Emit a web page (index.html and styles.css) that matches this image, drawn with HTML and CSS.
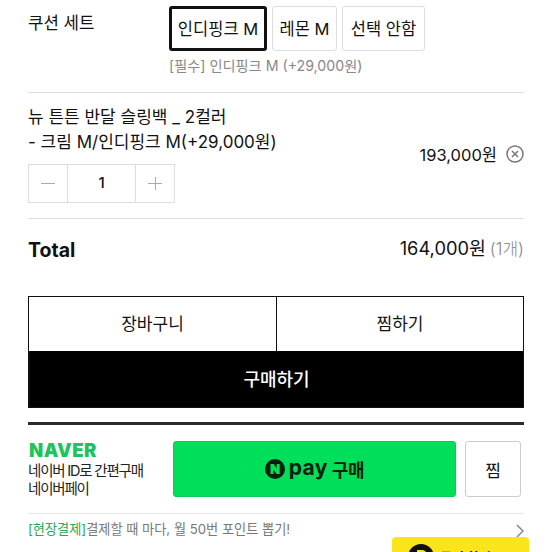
FILE: index.html
```html
<!DOCTYPE html>
<html lang="ko">
<head>
    <meta charset="UTF-8">
    <meta name="viewport" content="width=device-width, initial-scale=1.0">
    <title>뉴 튼튼 반달 슬링백</title>
    <link rel="stylesheet" href="styles.css">
</head>
<body>
    <main class="product">
        <section class="option-row">
            <h2 class="option-name">쿠션 세트</h2>
            <div class="option-content">
                <div class="option-list">
                    <button class="option selected">인디핑크 M</button>
                    <button class="option lemon">레몬 M</button>
                    <button class="option none">선택 안함</button>
                </div>
                <p class="option-desc">[필수] 인디핑크 M (+29,000원)</p>
            </div>
        </section>

        <section class="item">
            <div class="item-info">
                <p class="item-name">뉴 튼튼 반달 슬링백 _ 2컬러</p>
                <p class="item-option">- 크림 M/인디핑크 M(+29,000원)</p>
                <div class="quantity">
                    <button class="qty-btn" aria-label="minus">
                        <svg width="14" height="14" viewBox="0 0 14 14"><path d="M0 6.5h14"/></svg>
                    </button>
                    <span class="qty-value">1</span>
                    <button class="qty-btn" aria-label="plus">
                        <svg width="14" height="14" viewBox="0 0 14 14"><path d="M0 6.5h14M7.5 0v13"/></svg>
                    </button>
                </div>
            </div>
            <div class="item-price">
                <span>193,000원</span>
                <svg class="remove" width="18" height="18" viewBox="0 0 18 18">
                    <circle cx="9" cy="9" r="8"/>
                    <path d="M6 6l6 6M12 6l-6 6"/>
                </svg>
            </div>
        </section>

        <section class="total">
            <strong class="total-title">Total</strong>
            <p class="total-price">164,000원<span class="count">(1개)</span></p>
        </section>

        <div class="actions">
            <button class="action">장바구니</button>
            <button class="action">찜하기</button>
            <button class="action buy">구매하기</button>
        </div>

        <section class="naver">
            <div class="naver-main">
                <div class="naver-info">
                    <strong class="naver-logo">NAVER</strong>
                    <p>네이버 ID로 간편구매</p>
                    <p>네이버페이</p>
                </div>
                <button class="npay">
                    <svg width="20" height="20" viewBox="0 0 20 20">
                        <circle cx="10" cy="10" r="10" fill="#04200e"/>
                        <path d="M5.5 15V5h3.2l3 4.6V5h3v10h-3.1L8.5 10.4V15z" fill="#00df5a"/>
                    </svg>
                    <span class="npay-logo">pay</span>
                    <span class="npay-text">구매</span>
                </button>
                <button class="wish">찜</button>
            </div>
            <div class="naver-event">
                <p><span class="event-tag">[현장결제]</span>결제할 때 마다, 월 50번 포인트 뽑기!</p>
                <svg width="8" height="14" viewBox="0 0 8 14"><path d="M1 1l6 6-6 6"/></svg>
            </div>
        </section>
    </main>

    <button class="floating">
        <svg width="26" height="26" viewBox="0 0 26 26">
            <circle cx="13" cy="13" r="13" fill="#111"/>
            <path d="M9 6h5a5 5 0 0 1 5 5v9H9z" fill="#fae51a"/>
        </svg>
        <span>문의 확인도구</span>
    </button>
</body>
</html>
```
FILE: styles.css
```css
* {
    margin: 0;
    padding: 0;
    box-sizing: border-box;
}

body {
    height: 552px;
    overflow: hidden;
    background: #fff;
    color: #111;
    font-family: Inter, "Noto Sans CJK KR", sans-serif;
    font-size: 17px;
    position: relative;
}

button {
    background: #fff;
    border: none;
    color: inherit;
    font-family: inherit;
    font-size: inherit;
    white-space: nowrap;
}

svg {
    display: block;
    flex: none;
    fill: none;
}

.product {
    padding: 6px 28px 0 28px;
}

.option-row {
    display: flex;
    height: 87px;
    border-bottom: 1px solid #ddd;
}

.option-name {
    width: 141px;
    padding-top: 5px;
    font-size: 16.8px;
    font-weight: 400;
    line-height: 24px;
}

.option-list {
    display: flex;
    gap: 5px;
}

.option {
    height: 45px;
    padding-bottom: 1px;
    border: 1px solid #ddd;
    border-radius: 3px;
    font-size: 16.5px;
}

.selected {
    width: 98px;
    border: 3px solid #111;
}

.lemon {
    width: 65px;
}

.none {
    width: 83px;
}

.option-desc {
    padding-top: 3px;
    color: #888;
    font-size: 14.2px;
    line-height: 24px;
}

.item {
    display: flex;
    justify-content: space-between;
    height: 126px;
    padding-top: 11px;
    border-bottom: 1px solid #ddd;
}

.item-name,
.item-option {
    font-size: 17px;
    line-height: 26px;
}

.item-option {
    margin-top: -1px;
}

.quantity {
    display: flex;
    width: 147px;
    height: 39px;
    margin-top: 9px;
    border: 1px solid #ddd;
}

.qty-btn {
    display: flex;
    align-items: center;
    justify-content: center;
    width: 38px;
    stroke: #aaa;
}

.qty-value {
    flex: 1;
    border: solid #ddd;
    border-width: 0 1px;
    font-size: 15px;
    font-weight: 500;
    line-height: 36px;
    text-align: center;
}

.item-price {
    display: flex;
    align-items: center;
    gap: 9px;
    height: 100px;
    font-size: 16.5px;
}

.remove {
    stroke: #777;
    stroke-width: 1.5;
}

.total {
    display: flex;
    justify-content: space-between;
    height: 77px;
    padding-top: 15px;
    line-height: 28px;
}

.total-title {
    padding-top: 2px;
    font-size: 19.5px;
}

.total-price {
    font-size: 18.3px;
}

.count {
    margin-left: 4px;
    color: #888;
    font-size: 17px;
    font-weight: 300;
}

.actions {
    display: grid;
    grid-template-columns: 1fr 1fr;
    grid-template-rows: 54px 56px;
    border: 1px solid #111;
}

.action {
    padding-bottom: 3px;
    font-size: 17px;
}

.action + .action {
    border-left: 1px solid #111;
}

.actions .buy {
    grid-column: span 2;
    background: #000;
    color: #fff;
    font-size: 18px;
    font-weight: 500;
}

.naver {
    margin-top: 14px;
    border-top: 3px solid #2b2b2d;
}

.naver-main {
    display: flex;
    height: 89px;
    padding-top: 16px;
    border-bottom: 1px solid #e5e5e5;
}

.naver-info {
    width: 145px;
    color: #222;
    font-size: 14.5px;
    letter-spacing: -1.2px;
    line-height: 18px;
}

.naver-logo {
    display: block;
    margin-bottom: 3px;
    padding-left: 1px;
    color: #1dc45b;
    font-family: Inter, sans-serif;
    font-size: 18.5px;
    font-weight: 900;
    letter-spacing: 0.4px;
    line-height: 18px;
}

.npay {
    display: flex;
    align-items: center;
    justify-content: center;
    width: 283px;
    height: 56px;
    border: 1px solid #0bcc57;
    border-radius: 3px;
    background: #00df5a;
    color: #04200e;
    font-weight: 700;
}

.npay-logo {
    margin: -4px 4px 0;
    font-family: Inter, sans-serif;
    font-size: 21px;
    letter-spacing: 0.4px;
}

.npay-text {
    font-size: 18px;
    letter-spacing: -0.3px;
}

.wish {
    width: 56px;
    height: 56px;
    margin-left: 9px;
    border: 1px solid #ccc;
    border-radius: 3px;
}

.naver-event {
    display: flex;
    justify-content: space-between;
    height: 27px;
    padding-top: 3px;
    color: #777;
    font-size: 13.2px;
    line-height: 24px;
}

.naver-event svg {
    margin-top: 7px;
    stroke: #888;
    stroke-width: 1.5;
}

.event-tag {
    color: #2aa65a;
}

.floating {
    position: absolute;
    top: 537px;
    left: 392px;
    display: flex;
    gap: 6px;
    width: 137px;
    height: 46px;
    padding: 7px 0 0 16px;
    border-radius: 4px;
    background: #fae51a;
    font-size: 13px;
    font-weight: 700;
    line-height: 26px;
}
```
